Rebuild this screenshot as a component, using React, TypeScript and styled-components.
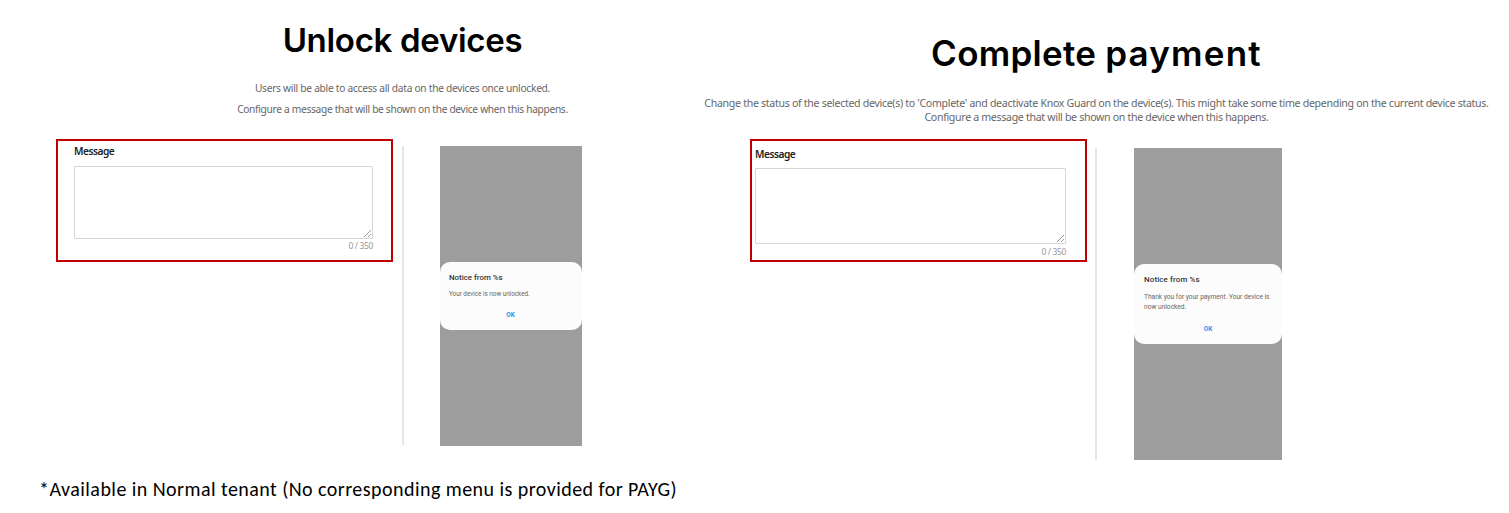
import React from "react";
import styled, { createGlobalStyle } from "styled-components";

const GlobalStyle = createGlobalStyle`
  *, *::before, *::after { box-sizing: border-box; }
  body { margin: 0; background: #fff; overflow: hidden; }
  h1, h2, p { margin: 0; }
`;

const Page = styled.main`
  width: 1509px;
  height: 513px;
  display: grid;
  grid-template-columns: 704px 785px;
  grid-template-rows: 476px 1fr;
  background: #fff;
  color: #000;
  font-family: "Noto Sans", sans-serif;
`;

const Panel = styled.section`
  display: flex;
  flex-direction: column;
`;

const Header = styled.header<{ $top: number; $left: number }>`
  height: 139px;
  flex: none;
  padding: ${(p) => p.$top}px 0 0 ${(p) => p.$left}px;
  display: flex;
  flex-direction: column;
  align-items: center;
  text-align: center;
`;

const Title = styled.h1<{ $size: number }>`
  font: 600 ${(p) => p.$size}px/40px Inter, sans-serif;
  white-space: nowrap;
`;

const Word = styled.span<{ $spacing: number }>`
  letter-spacing: ${(p) => p.$spacing}px;
`;

const Description = styled.div<{ $gap: number; $line: number; $size: number }>`
  margin-top: ${(p) => p.$gap}px;
  font-size: ${(p) => p.$size}px;
  line-height: ${(p) => p.$line}px;
  color: #666;
  white-space: nowrap;
`;

const Line = styled.p<{ $spacing: number }>`
  letter-spacing: ${(p) => p.$spacing}px;
`;

const Content = styled.div<{ $left: number }>`
  display: flex;
  align-items: flex-start;
  padding-left: ${(p) => p.$left}px;
`;

const MessageFrame = styled.div<{ $pad: string }>`
  width: 337px;
  height: 123px;
  border: 2px solid #c00000;
  padding: ${(p) => p.$pad};
  flex: none;
`;

const Label = styled.label<{ $gap: number; $line: number }>`
  display: block;
  font: 600 10.2px/${(p) => p.$line}px "Noto Sans", sans-serif;
  letter-spacing: -0.5px;
  color: #222;
  margin-bottom: ${(p) => p.$gap}px;
`;

const Field = styled.div<{ $height: number }>`
  height: ${(p) => p.$height}px;
  border: 1px solid #d6d6d6;
  border-radius: 1px;
  display: flex;
  align-items: flex-end;
  justify-content: flex-end;
`;

const Counter = styled.p<{ $gap: number }>`
  margin-top: ${(p) => p.$gap}px;
  font-size: 8.5px;
  line-height: 12px;
  letter-spacing: -0.35px;
  color: #999;
  text-align: right;
`;

const Divider = styled.div<{ $height: number; $margin: string }>`
  width: 2px;
  height: ${(p) => p.$height}px;
  margin: ${(p) => p.$margin};
  background: #e6e6e6;
  flex: none;
`;

const Phone = styled.div<{ $width: number; $height: number; $top: number }>`
  width: ${(p) => p.$width}px;
  height: ${(p) => p.$height}px;
  margin-top: ${(p) => p.$top}px;
  background: #9d9d9d;
  display: flex;
  align-items: center;
  flex: none;
`;

const Dialog = styled.div<{ $height: number; $left: number }>`
  width: 100%;
  height: ${(p) => p.$height}px;
  padding: 10px 10px 0 ${(p) => p.$left}px;
  background: #fcfcfc;
  border-radius: 10px;
  font-family: Roboto, sans-serif;
  white-space: nowrap;
`;

const DialogTitle = styled.h2<{ $spacing: number }>`
  font-size: 7.9px;
  line-height: 11px;
  font-weight: 500;
  letter-spacing: ${(p) => p.$spacing}px;
  color: #333;
`;

const DialogText = styled.p<{ $size: number; $gap: number }>`
  margin-top: ${(p) => p.$gap}px;
  font-size: ${(p) => p.$size}px;
  line-height: 10px;
  color: #666;
`;

const DialogAction = styled.p<{ $gap: number }>`
  margin-top: ${(p) => p.$gap}px;
  font-size: 6.4px;
  line-height: 10px;
  font-weight: 700;
  color: #2b8ff2;
  text-align: center;
`;

const Footnote = styled.p`
  grid-column: 1 / -1;
  padding-left: 39px;
  font: 400 20px/27px Carlito, Lato, sans-serif;
  letter-spacing: 0.45px;
  white-space: nowrap;
`;

const Grip = () => (
  <svg width="9" height="9" viewBox="0 0 9 9" fill="none" stroke="#8a8a8a" strokeWidth="0.9">
    <path d="M1 8L8 1M5 8L8 5" />
  </svg>
);

export default function App() {
  return (
    <>
      <GlobalStyle />
      <Page>
        <Panel>
          <Header $top={20} $left={101}>
            <Title $size={33}>
              <Word $spacing={-0.3}>Unlock devices</Word>
            </Title>
            <Description $gap={18} $line={21} $size={10.2}>
              <Line $spacing={-0.27}>Users will be able to access all data on the devices once unlocked.</Line>
              <Line $spacing={-0.31}>Configure a message that will be shown on the device when this happens.</Line>
            </Description>
          </Header>
          <Content $left={56}>
            <MessageFrame $pad="4px 18px 0 16px">
              <Label $gap={8} $line={13}>Message</Label>
              <Field $height={73}><Grip /></Field>
              <Counter $gap={1}>0 / 350</Counter>
            </MessageFrame>
            <Divider $height={299} $margin="7px 36px 0 9px" />
            <Phone $width={142} $height={300} $top={7}>
              <Dialog $height={68} $left={9}>
                <DialogTitle $spacing={0}>Notice from %s</DialogTitle>
                <DialogText $size={6.3} $gap={6}>Your device is now unlocked.</DialogText>
                <DialogAction $gap={11}>OK</DialogAction>
              </Dialog>
            </Phone>
          </Content>
        </Panel>
        <Panel>
          <Header $top={33} $left={0}>
            <Title $size={35}>
              <Word $spacing={0.25}>Complete </Word>
              <Word $spacing={1.2}>payment</Word>
            </Title>
            <Description $gap={23} $line={14} $size={10.6}>
              <Line $spacing={-0.31}>
                Change the status of the selected device(s) to 'Complete' and deactivate Knox Guard on the device(s). This might take some time depending on the current device status.
              </Line>
              <Line $spacing={-0.32}>Configure a message that will be shown on the device when this happens.</Line>
            </Description>
          </Header>
          <Content $left={46}>
            <MessageFrame $pad="6px 19px 0 3px">
              <Label $gap={7} $line={14}>Message</Label>
              <Field $height={76}><Grip /></Field>
              <Counter $gap={2}>0 / 350</Counter>
            </MessageFrame>
            <Divider $height={312} $margin="9px 37px 0 8px" />
            <Phone $width={148} $height={312} $top={9}>
              <Dialog $height={80} $left={10}>
                <DialogTitle $spacing={0.15}>Notice from %s</DialogTitle>
                <DialogText $size={6.6} $gap={7}>
                  Thank you for your payment. Your device is
                  <br />
                  now unlocked.
                </DialogText>
                <DialogAction $gap={12}>OK</DialogAction>
              </Dialog>
            </Phone>
          </Content>
        </Panel>
        <Footnote>*Available in Normal tenant (No corresponding menu is provided for PAYG)</Footnote>
      </Page>
    </>
  );
}
